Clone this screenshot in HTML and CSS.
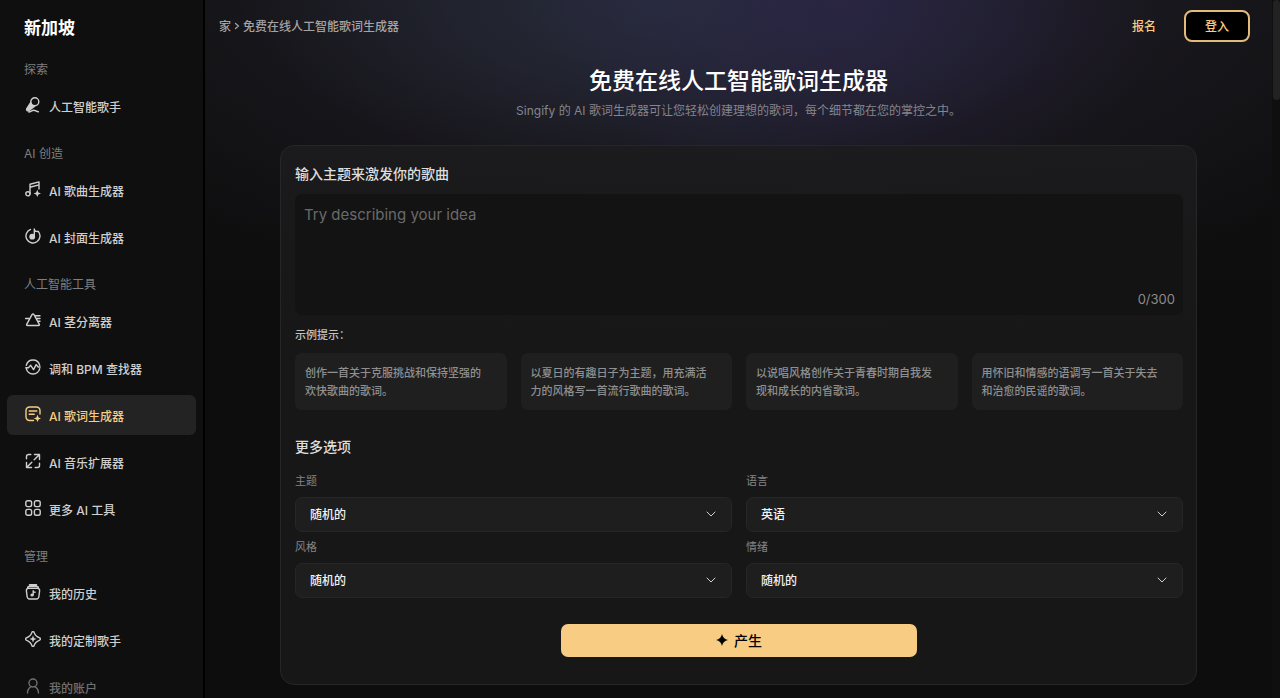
FILE: index.html
```html
<!DOCTYPE html>
<html lang="zh-CN">
<head>
<meta charset="utf-8">
<meta name="viewport" content="width=device-width, initial-scale=1">
<title>免费在线人工智能歌词生成器</title>
<link rel="stylesheet" href="styles.css">
</head>
<body>
<div class="app">
  <aside class="sidebar">
    <div class="brand">新加坡</div>
    <nav class="nav">
      <h2 class="nav-title">探索</h2>
      <a class="nav-item" href="#">
        <svg class="icon" viewBox="0 0 16 16"><circle cx="9.8" cy="4.800" r="4"/><path d="M5.700 5.700 1.800 11.600c-.8 1.400.6 2.800 2 2L9.600 9.300C7.600 9 6.200 7.700 5.700 5.700Z" fill="currentColor"/><path d="M3.800 15c2-.1 3-1.800 5-1.800 1.800 0 2.400 1.500 4.600 1.500"/></svg>
        人工智能歌手</a>
      <h2 class="nav-title">AI 创造</h2>
      <a class="nav-item" href="#">
        <svg class="icon" viewBox="0 0 16 16"><circle cx="2.900" cy="12.800" r="2.100"/><path d="M5 12.800V3.200L14 .9v7M5 6.200l9-2.300"/><path d="M12.300 8.700 13.400 11.400 16 12.500 13.400 13.600 12.300 16 11.200 13.600 8.600 12.500 11.200 11.400Z" fill="currentColor" stroke="none"/></svg>
        AI 歌曲生成器</a>
      <a class="nav-item" href="#">
        <svg class="icon" viewBox="0 0 16 16"><path d="M5.500 1.400a7 7 0 1 0 7.800 2"/><circle cx="7.200" cy="8.700" r="2.900" fill="currentColor" stroke="none"/><path d="M9.300 8.700V.9c0 1.800 1.500 2.600 3.600 2.600"/></svg>
        AI 封面生成器</a>
      <h2 class="nav-title">人工智能工具</h2>
      <a class="nav-item" href="#">
        <svg class="icon" viewBox="0 0 16 16"><path d="M7 2.700 1.700 12.300q-.5 1.200.8 1.200h11q1.300 0 .8-1.200L9 2.700Q8 1.300 7 2.700ZM.5 6.500h3.300M10.800 3.700H15M12 6.500h3M13.300 9.200H15"/></svg>
        AI 茎分离器</a>
      <a class="nav-item" href="#">
        <svg class="icon" viewBox="0 0 16 16"><path d="M1.300 6.300a6.900 6.900 0 0 1 13.400 0M14.700 9.700a6.900 6.900 0 0 1-13.400 0M.8 8.800h2.600l2.300-2.500 2.800 4.300 2.700-5 2 2.400h2"/></svg>
        调和 BPM 查找器</a>
      <a class="nav-item is-active" href="#" aria-current="page">
        <svg class="icon" viewBox="0 0 16 16"><path d="M8.500 14.500H4.500a3.500 3.500 0 0 1-3.500-3.500V4.500A3.500 3.500 0 0 1 4.500 1h7A3.500 3.500 0 0 1 15 4.500V8M4.200 5h7.600M4.200 8.200h5"/><path d="M12.500 8.700 13.600 11.400 16 12.500 13.600 13.600 12.500 16 11.400 13.600 8.700 12.500 11.400 11.400Z" fill="currentColor" stroke="none"/></svg>
        AI 歌词生成器</a>
      <a class="nav-item" href="#">
        <svg class="icon" viewBox="0 0 16 16"><path d="M9.500 1.500h5v5M14.500 1.500 9.200 6.800M6.500 14.500h-5v-5M1.500 14.500l5.300-5.300M5.800 1.500H3.500a2 2 0 0 0-2 2v2.200M10.200 14.500h2.300a2 2 0 0 0 2-2v-2.200"/></svg>
        AI 音乐扩展器</a>
      <a class="nav-item" href="#">
        <svg class="icon" viewBox="0 0 16 16"><rect x=".8" y=".8" width="5.800" height="5.800" rx="1.800"/><rect x="9.400" y=".8" width="5.800" height="5.800" rx="1.800"/><rect x=".8" y="9.400" width="5.800" height="5.800" rx="1.800"/><rect x="9.400" y="9.400" width="5.800" height="5.800" rx="1.800"/></svg>
        更多 AI 工具</a>
      <h2 class="nav-title">管理</h2>
      <a class="nav-item" href="#">
        <svg class="icon" viewBox="0 0 16 16"><path d="M4.500 .8h7M2.600 3.400C2.900 2.400 3.700 2.300 4.500 2.300h7c.8 0 1.600.1 1.900 1.100M3.700 4.300h8.600c1.700 0 2.500 1 2.300 2.500l-.7 5.700c-.2 1.600-1 2.500-2.500 2.500H4.600c-1.500 0-2.300-.9-2.500-2.500l-.7-5.700c-.2-1.500.6-2.500 2.300-2.500Z"/><circle cx="7" cy="11" r="1.600" fill="currentColor" stroke="none"/><path d="M8.200 11V6.800c.2 1 .9 1.400 1.900 1.500"/></svg>
        我的历史</a>
      <a class="nav-item" href="#">
        <svg class="icon" viewBox="0 0 16 16"><path d="M6.900 1.300q1.100-1.400 2.200 0 .9 3.600 5.600 5.600 1.400 1.100 0 2.200-4.700 2-5.600 5.600-1.100 1.400-2.200 0-.9-3.600-5.600-5.600-1.400-1.100 0-2.200 4.700-2 5.600-5.600Z"/><path d="M8 4.500 9 7l2.500 1L9 9 8 11.500 7 9 4.500 8 7 7Z" fill="currentColor" stroke="none"/></svg>
        我的定制歌手</a>
      <a class="nav-item is-faded" href="#">
        <svg class="icon" viewBox="0 0 16 16"><circle cx="8" cy="5" r="4"/><path d="M2.500 15c0-3 1.500-5.200 3.600-6.400M13.500 15c0-3-1.500-5.200-3.600-6.400"/></svg>
        我的账户</a>
    </nav>
  </aside>

  <main class="main">
    <header class="topbar">
      <nav class="crumbs" aria-label="路径">
        <a href="#">家</a>
        <svg class="crumb-arrow" viewBox="0 0 5 8"><path d="M1 1.500l3 2.500L1 6.500"/></svg>
        <span>免费在线人工智能歌词生成器</span>
      </nav>
      <div class="account">
        <a class="signup" href="#">报名</a>
        <button class="login" type="button">登入</button>
      </div>
    </header>

    <section class="hero">
      <h1 class="hero-title">免费在线人工智能歌词生成器</h1>
      <p class="hero-text">Singify 的 AI 歌词生成器可让您轻松创建理想的歌词，每个细节都在您的掌控之中。</p>
    </section>

    <form class="card">
      <label class="heading" for="idea">输入主题来激发你的歌曲</label>
      <div class="idea">
        <textarea class="idea-input" id="idea" maxlength="300" placeholder="Try describing your idea"></textarea>
        <span class="idea-count">0/300</span>
      </div>

      <p class="prompts-title">示例提示：</p>
      <div class="prompts">
        <button class="prompt" type="button">创作一首关于克服挑战和保持坚强的<br>欢快歌曲的歌词。</button>
        <button class="prompt" type="button">以夏日的有趣日子为主题，用充满活<br>力的风格写一首流行歌曲的歌词。</button>
        <button class="prompt" type="button">以说唱风格创作关于青春时期自我发<br>现和成长的内省歌词。</button>
        <button class="prompt" type="button">用怀旧和情感的语调写一首关于失去<br>和治愈的民谣的歌词。</button>
      </div>

      <h2 class="heading options-title">更多选项</h2>
      <div class="options">
        <div class="field">
          <label class="field-label" for="theme">主题</label>
          <div class="field-box"><select class="field-select" id="theme"><option>随机的</option></select><svg class="chevron" viewBox="0 0 10 6"><path d="M1 1l4 4 4-4"/></svg></div>
        </div>
        <div class="field">
          <label class="field-label" for="language">语言</label>
          <div class="field-box"><select class="field-select" id="language"><option>英语</option></select><svg class="chevron" viewBox="0 0 10 6"><path d="M1 1l4 4 4-4"/></svg></div>
        </div>
        <div class="field">
          <label class="field-label" for="style">风格</label>
          <div class="field-box"><select class="field-select" id="style"><option>随机的</option></select><svg class="chevron" viewBox="0 0 10 6"><path d="M1 1l4 4 4-4"/></svg></div>
        </div>
        <div class="field">
          <label class="field-label" for="mood">情绪</label>
          <div class="field-box"><select class="field-select" id="mood"><option>随机的</option></select><svg class="chevron" viewBox="0 0 10 6"><path d="M1 1l4 4 4-4"/></svg></div>
        </div>
      </div>

      <button class="generate" type="button">
        <svg class="spark" viewBox="0 0 12 12"><path d="M6 0Q7 5 12 6 7 7 6 12 5 7 0 6 5 5 6 0Z"/></svg>
        产生
      </button>
    </form>
  </main>
  <div class="scroll-track"><div class="scroll-thumb"></div></div>
</div>
</body>
</html>
```

FILE: styles.css
```css
* {
  box-sizing: border-box;
}

body {
  margin: 0;
  background: #0d0d0d;
  color: #e4e4e4;
  font-family: Inter, "Noto Sans CJK SC", sans-serif;
  font-size: 12px;
}

h1, h2, p {
  margin: 0;
}

a {
  color: inherit;
  text-decoration: none;
}

button, textarea, select {
  font-family: inherit;
}

svg {
  fill: none;
  stroke: currentColor;
  stroke-linecap: round;
  stroke-linejoin: round;
}

.app {
  display: flex;
  height: 100vh;
  overflow: hidden;
}

/* Sidebar */
.sidebar {
  flex: 0 0 205px;
  overflow: hidden;
  background: #0f0f0f;
  border-right: 2px solid #000;
}

.brand {
  height: 46px;
  padding: 14px 24px 0;
  color: #fff;
  font-size: 17px;
  font-weight: 700;
  line-height: 28px;
}

.nav {
  display: flex;
  flex-direction: column;
}

.nav-title {
  height: 37px;
  padding: 14px 24px 0;
  color: #7f7f7f;
  font-size: 12px;
  font-weight: 400;
  line-height: 20px;
}

.nav-item {
  display: flex;
  align-items: center;
  gap: 8px;
  height: 40px;
  margin: 3px 7px 4px;
  padding-left: 18px;
  border-radius: 6px;
  color: #cfcfcf;
  font-weight: 500;
}

.nav-item.is-active {
  background: #232323;
  color: #f8cc83;
}

.nav-item.is-faded {
  opacity: 0.5;
}

.icon {
  width: 16px;
  height: 16px;
  margin-bottom: 2px;
  stroke-width: 1.4;
}

/* Main column */
.main {
  flex: 1;
  min-width: 0;
  overflow: hidden;
  background:
    radial-gradient(ellipse 320px 200px at 60% 0, rgba(44, 36, 76, 0.6), transparent),
    radial-gradient(ellipse 420px 180px at 43% 0, rgba(42, 51, 68, 0.7), transparent),
    radial-gradient(ellipse 700px 340px at 50% 0, rgba(38, 34, 48, 0.8), transparent),
    linear-gradient(#121214, #0d0d0d 300px);
}

.topbar {
  display: flex;
  align-items: center;
  justify-content: space-between;
  height: 52px;
  padding: 0 22px 0 14px;
}

.crumbs {
  display: flex;
  align-items: center;
  gap: 3px;
  padding-bottom: 1px;
  color: #a3a3a6;
  font-weight: 500;
}

.crumb-arrow {
  width: 6px;
  height: 8px;
  stroke-width: 1.3;
}

.account {
  display: flex;
  align-items: center;
  gap: 28px;
  color: #f8cc83;
  font-weight: 500;
}

.signup {
  padding-bottom: 1px;
}

.login {
  width: 66px;
  height: 32px;
  padding: 0 0 1px;
  border: 2px solid #e2bb79;
  border-radius: 8px;
  background: #000;
  color: inherit;
  font-size: 12px;
  font-weight: 500;
}

.hero {
  padding: 12px 14px 24px;
  text-align: center;
}

.hero-title {
  color: #fff;
  font-size: 23px;
  font-weight: 500;
  line-height: 34px;
}

.hero-text {
  padding-top: 3px;
  color: #85858c;
  line-height: 20px;
}

/* Generator card */
.card {
  display: flex;
  flex-direction: column;
  width: calc(100% - 28px);
  max-width: 917px;
  margin: 0 auto;
  padding: 18px 13px 27px 14px;
  border: 1px solid #262628;
  border-radius: 14px;
  background: linear-gradient(rgba(28, 28, 30, 0.85), #171717 200px);
}

.heading {
  color: #dedede;
  font-size: 14px;
  font-weight: 500;
  line-height: 20px;
}

.idea {
  position: relative;
  height: 121px;
  margin-top: 10px;
}

.idea-input {
  display: block;
  width: 100%;
  height: 100%;
  padding: 11px 9px;
  border: 0;
  border-radius: 7px;
  outline: 0;
  background: #131313;
  color: #e4e4e4;
  font-size: 15px;
  line-height: 20px;
  resize: none;
}

.idea-input::placeholder {
  color: #6a6a6a;
}

.idea-count {
  position: absolute;
  right: 8px;
  bottom: 7px;
  color: #8b8b8b;
  font-size: 13px;
  line-height: 18px;
}

.prompts-title {
  margin-top: 10px;
  color: #c4c4c4;
  font-size: 11px;
  font-weight: 500;
  line-height: 20px;
}

.prompts {
  display: grid;
  grid-template-columns: repeat(4, 1fr);
  gap: 14px;
  margin-top: 8px;
}

.prompt {
  padding: 11px 10px 10px;
  border: 0;
  border-radius: 7px;
  background: #1f1f1f;
  color: #8f8f8f;
  font-size: 11px;
  font-weight: 500;
  line-height: 18px;
  text-align: left;
}

.options-title {
  margin-top: 27px;
}

.options {
  display: grid;
  grid-template-columns: 1fr 1fr;
  gap: 7px 14px;
  margin-top: 16px;
}

.field-label {
  display: block;
  color: #858585;
  font-size: 11px;
  line-height: 16px;
}

.field-box {
  position: relative;
  margin-top: 8px;
}

.field-select {
  display: block;
  width: 100%;
  height: 35px;
  padding: 0 14px 1px;
  border: 1px solid #262626;
  border-radius: 7px;
  appearance: none;
  background: #1e1e1e;
  color: #f2f2f2;
  font-size: 12px;
  font-weight: 500;
}

.chevron {
  position: absolute;
  top: 14px;
  right: 16px;
  width: 10px;
  height: 6px;
  color: #cfcfcf;
  pointer-events: none;
}

.generate {
  display: flex;
  align-items: center;
  justify-content: center;
  align-self: center;
  gap: 6px;
  width: 40%;
  height: 33px;
  margin-top: 26px;
  padding: 0 0 1px;
  border: 0;
  border-radius: 7px;
  background: #f9cc84;
  color: #000;
  font-size: 14px;
  font-weight: 500;
}

.spark {
  width: 12px;
  height: 12px;
  fill: currentColor;
  stroke: none;
}

/* Scroll indicator */
.scroll-track {
  flex: 0 0 8px;
  background: #0f0f0f;
}

.scroll-thumb {
  height: 100px;
  margin-left: 1px;
  border-radius: 4px;
  background: #222;
}
```
